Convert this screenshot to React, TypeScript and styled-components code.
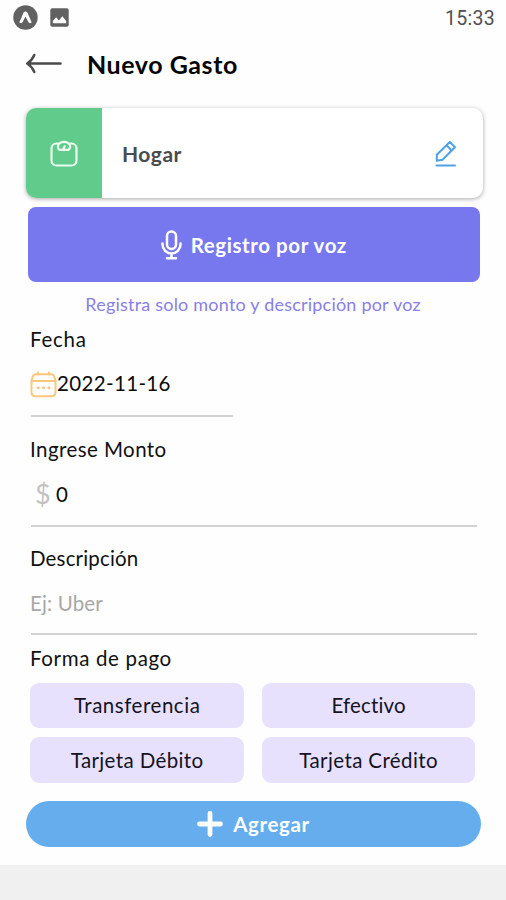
import React from "react";
import styled, { createGlobalStyle } from "styled-components";

const GlobalStyle = createGlobalStyle`
  * { box-sizing: border-box; }
  body { margin: 0; background: #fefefe; font-family: Lato, sans-serif; color: #0c0c0c; }
  button { font-family: inherit; color: inherit; border: 0; padding: 0; margin: 0; cursor: pointer; }
  svg { display: block; flex: none; }
`;

const Screen = styled.div`
  display: flex;
  flex-direction: column;
  height: 900px;
  background: #fefefe;
`;

const StatusBar = styled.div`
  display: flex;
  align-items: center;
  justify-content: space-between;
  height: 36px;
  padding: 0 11px 0 13px;
`;

const StatusIcons = styled.div`
  display: flex;
  align-items: center;
  gap: 12px;
  margin-top: -1px;
`;

const Clock = styled.span`
  font: 400 19.5px/36px Roboto, sans-serif;
  letter-spacing: 0.3px;
  margin-top: 1px;
  color: #505052;
`;

const Header = styled.header`
  display: flex;
  align-items: center;
  height: 54px;
  padding-left: 25px;
  gap: 25px;
`;

const IconButton = styled.button`
  background: none;
`;

const Text = styled.span<{ $track: number }>`
  letter-spacing: ${(p) => p.$track}px;
  white-space: nowrap;
`;

const Title = styled.h1`
  margin: 2px 0 0;
  font-size: 25px;
  font-weight: 700;
  line-height: 30px;
  color: #050505;
`;

const CategoryCard = styled.section`
  display: flex;
  align-items: center;
  width: 457px;
  height: 90px;
  margin: 18px 0 0 26px;
  border-radius: 10px;
  overflow: hidden;
  background: #fff;
  box-shadow: 0 1px 4px rgba(0, 0, 0, 0.34);
`;

const CategoryBadge = styled.div`
  display: flex;
  align-items: center;
  justify-content: center;
  width: 75.5px;
  height: 100%;
  background: #60cb8a;
`;

const CategoryName = styled.div`
  flex: 1;
  padding-left: 20.5px;
  font-size: 21px;
  font-weight: 700;
  color: #4b4b4b;
`;

const EditButton = styled(IconButton)`
  margin-right: 26px;
`;

const VoiceButton = styled.button`
  display: flex;
  align-items: center;
  justify-content: center;
  gap: 9px;
  width: 451.5px;
  height: 75px;
  margin: 9px 0 0 28px;
  border-radius: 8px;
  background: #7878ee;
  color: #fff;
  font-size: 20.5px;
  font-weight: 700;
`;

const Hint = styled.p`
  margin: 0;
  text-align: center;
  font-size: 18px;
  line-height: 44px;
  color: #8980e6;
`;

const Form = styled.form`
  display: flex;
  flex-direction: column;
  width: 446px;
  margin-left: 31px;
  font-size: 20.5px;
`;

const Label = styled.label<{ $top: number }>`
  margin: ${(p) => p.$top}px 0 0 -1px;
  height: 26px;
  line-height: 26px;
  color: #111;
`;

const Field = styled.div<{ $width: number; $height: number }>`
  display: flex;
  align-items: center;
  width: ${(p) => p.$width}px;
  height: ${(p) => p.$height}px;
  border-bottom: 2px solid #d3d3d3;
`;

const DateText = styled.span`
  margin-top: -1px;
`;

const Currency = styled.span`
  width: 25px;
  padding-left: 4px;
  font-size: 27px;
  line-height: 30px;
  color: #c2c2c2;
`;

const Placeholder = styled.span`
  margin: 1px 0 0 -1px;
  color: #a8a8a8;
`;

const Options = styled.div`
  display: grid;
  grid-template-columns: 213.5px 213.5px;
  grid-auto-rows: 45.5px;
  gap: 9px 18px;
  margin: 11.5px 0 0 -0.6px;
`;

const Option = styled.button`
  border-radius: 9px;
  background: #e7e1fe;
  font-size: 20.5px;
  color: #15131e;
`;

const AddButton = styled.button`
  display: flex;
  align-items: center;
  justify-content: center;
  gap: 10px;
  width: 455px;
  height: 46.5px;
  margin: 18px 0 0 26px;
  border-radius: 24px;
  background: #65adec;
  color: #fff;
  font-size: 20.5px;
  font-weight: 700;
`;

const NavigationBar = styled.div`
  height: 35px;
  margin-top: auto;
  background: #f0f0f0;
`;

const ExpoIcon = () => (
  <svg width="25" height="25" viewBox="0 0 25 25">
    <circle cx="12.5" cy="12.5" r="12.2" fill="#616161" />
    <path d="M6.300 17.500 10.700 7.200q1.800-1.600 3.600 0l4.400 10.300q-1.700 1.500-3.200-.3L12.500 11.500 9.500 17.200q-1.500 1.800-3.200.3z" fill="#fff" />
  </svg>
);

const PictureIcon = () => (
  <svg width="19" height="19" viewBox="0 0 19 19">
    <rect x="0.300" y="0.300" width="18.400" height="18.400" rx="2" fill="#616161" />
    <path d="M2.800 15.300V13L6.200 9.300l2.600 3.200 3.600-4.300 3.800 4.800v2.300z" fill="#fff" />
  </svg>
);

const BackIcon = () => (
  <svg width="37" height="22" viewBox="0 0 37 22" fill="none" stroke="#4b4b4b" strokeWidth="2.500" strokeLinecap="round" strokeLinejoin="round">
    <path d="M2.500 11.500h33M9.300 3C7.800 6.500 5.500 9.500 2.200 11.500 5.500 13.500 7.800 16.500 9.300 20" />
  </svg>
);

const ScaleIcon = () => (
  <svg width="28" height="28" viewBox="0 0 28 28" fill="none" stroke="#e9fff0" strokeWidth="2.200" strokeLinecap="round" strokeLinejoin="round">
    <path d="M8 4.500H6.500a5 5 0 0 0-5 5V21.500a5 5 0 0 0 5 5h15a5 5 0 0 0 5-5V9.500a5 5 0 0 0-5-5H20" />
    <path d="M9.500 10.800C7 9 7.500 5.500 10 4c2.500-1.400 5.500-1.400 8 0s3 5 .5 6.800zM13.200 10.300l1.500-3" />
  </svg>
);

const EditIcon = () => (
  <svg width="22" height="27" viewBox="0 0 22 27" fill="none" stroke="#4ea3e8" strokeWidth="2" strokeLinecap="round" strokeLinejoin="round">
    <path d="M1.800 20.800V14.800L14.800 2 20 7.300 7.500 19.800zM11.500 5.200 16.800 10.500M1.500 25.500h18.500" />
  </svg>
);

const MicIcon = () => (
  <svg width="21" height="30" viewBox="0 0 21 30" fill="none" stroke="#fff" strokeWidth="2.500" strokeLinecap="round">
    <rect x="6" y="1.500" width="9" height="17.500" rx="4.500" />
    <path d="M1.500 13.500v1a9 9 0 0 0 18 0v-1M10.500 23.500v4.500M6 28.300h9" />
  </svg>
);

const CalendarIcon = () => (
  <svg width="26" height="26" viewBox="0 0 26 26" fill="none" stroke="#fbc77e" strokeWidth="2" strokeLinecap="round" strokeLinejoin="round">
    <path d="M.5 10 1.800 5.500Q2.500 3.300 5 3.300H20Q22.500 3.300 23.200 5.500L24.500 10V21.500a3.800 3.800 0 0 1-3.800 3.800H4.300A3.800 3.800 0 0 1 .500 21.500z" />
    <path d="M.5 10h24M7 1.500v2M18 1.500v2" />
    <path d="M7.200 16.800h.1M12.500 16.800h.1M17.800 16.800h.1" strokeWidth="3" />
  </svg>
);

const CalendarSlot = styled.span`
  margin-left: -0.5px;
  width: 26.5px;
  svg { overflow: visible; }
`;

const PlusIcon = () => (
  <svg width="26" height="26" viewBox="0 0 26 26" fill="none" stroke="#fff" strokeWidth="4.800" strokeLinecap="round">
    <path d="M13 2.500v21M2.500 13h21" />
  </svg>
);

const paymentMethods = [
  { name: "Transferencia", track: 0.53 },
  { name: "Efectivo", track: 0.14 },
  { name: "Tarjeta Débito", track: 0.38 },
  { name: "Tarjeta Crédito", track: 0.4 },
];

export default function App() {
  return (
    <Screen>
      <GlobalStyle />
      <StatusBar>
        <StatusIcons>
          <ExpoIcon />
          <PictureIcon />
        </StatusIcons>
        <Clock>15:33</Clock>
      </StatusBar>
      <Header>
        <IconButton aria-label="Volver"><BackIcon /></IconButton>
        <Title><Text $track={0.55}>Nuevo Gasto</Text></Title>
      </Header>
      <CategoryCard>
        <CategoryBadge><ScaleIcon /></CategoryBadge>
        <CategoryName><Text $track={0.5}>Hogar</Text></CategoryName>
        <EditButton aria-label="Editar"><EditIcon /></EditButton>
      </CategoryCard>
      <VoiceButton>
        <MicIcon />
        <Text $track={0.58}>Registro por voz</Text>
      </VoiceButton>
      <Hint><Text $track={0.21}>Registra solo monto y descripción por voz</Text></Hint>
      <Form>
        <Label $top={0}><Text $track={0.75}>Fecha</Text></Label>
        <Field $width={202} $height={65}>
          <CalendarSlot><CalendarIcon /></CalendarSlot>
          <DateText><Text $track={0.35}>2022-11-16</Text></DateText>
        </Field>
        <Label $top={19}><Text $track={0.43}>Ingrese Monto</Text></Label>
        <Field $width={446} $height={65}>
          <Currency>$</Currency>
          <Text $track={0}>0</Text>
        </Field>
        <Label $top={18}><Text $track={0.17}>Descripción</Text></Label>
        <Field $width={446} $height={64}>
          <Placeholder><Text $track={0.15}>Ej: Uber</Text></Placeholder>
        </Field>
        <Label $top={10} as="div"><Text $track={0.65}>Forma de pago</Text></Label>
        <Options>
          {paymentMethods.map((m) => (
            <Option key={m.name} type="button"><Text $track={m.track}>{m.name}</Text></Option>
          ))}
        </Options>
      </Form>
      <AddButton>
        <PlusIcon />
        <Text $track={0.6}>Agregar</Text>
      </AddButton>
      <NavigationBar />
    </Screen>
  );
}
